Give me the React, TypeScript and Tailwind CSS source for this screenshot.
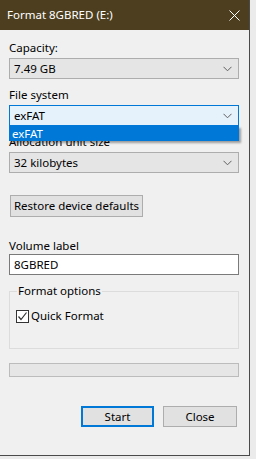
import React from "react";

const Chevron = () => (
  <svg width="9" height="6" viewBox="0 0 9 6" className="shrink-0">
    <path d="M0.5 0.8 L4.5 4.8 L8.5 0.8" fill="none" stroke="#606060" strokeWidth="1" />
  </svg>
);

function Combo({ value, active }: { value: string; active?: boolean }) {
  return (
    <div
      className={
        active
          ? "h-[21px] w-[230px] border border-[#0078d7] bg-[#e5f1fb] flex items-center justify-between pl-[4px] pr-[6px]"
          : "h-[21px] w-[230px] border border-[#adadad] bg-[#e5e5e5] flex items-center justify-between pl-[4px] pr-[6px]"
      }
    >
      <span className="text-black">{value}</span>
      <Chevron />
    </div>
  );
}

export default function App() {
  return (
    <div
      className="w-[256px] h-[459px] bg-[#ebebeb] overflow-hidden text-[11.5px] leading-[16px]"
      style={{ fontFamily: '"Noto Sans", "Liberation Sans", sans-serif' }}
    >
      <div className="w-[250px] h-[456px] bg-[#f0f0f0] border-r border-b border-[#4a4a4a] flex flex-col">
        <div className="h-[30px] shrink-0 bg-[#4d3e1f] flex items-center justify-between pl-[7px] pr-[9px]">
          <span className="text-white">Format 8GBRED (E:)</span>
          <svg width="11" height="11" viewBox="0 0 11 11">
            <path d="M0.5 0.5 L10.5 10.5 M10.5 0.5 L0.5 10.5" stroke="#ffffff" strokeWidth="1" />
          </svg>
        </div>
        <div className="flex flex-col pl-[9px] text-black">
          <div className="mt-[10px] h-[16px]">Capacity:</div>
          <div className="mt-[2px]">
            <Combo value="7.49 GB" />
          </div>
          <div className="mt-[8px] h-[16px]">File system</div>
          <div className="mt-[2px] relative">
            <Combo value="exFAT" active />
            <div className="absolute left-0 top-[21px] w-[230px] h-[15px] bg-[#0078d7] text-white pl-[3px] flex items-center shadow-[2px_2px_2px_rgba(0,0,0,0.35)] z-10">
              <span className="leading-[15px]">exFAT</span>
            </div>
          </div>
          <div className="mt-[8px] h-[16px]">Allocation unit size</div>
          <div className="mt-[2px]">
            <Combo value="32 kilobytes" />
          </div>
          <div className="mt-[22px] ml-[1px] w-[133px] h-[22px] border border-[#adadad] bg-[#e1e1e1] flex items-center justify-center">
            Restore device defaults
          </div>
          <div className="mt-[21px] h-[16px]">Volume label</div>
          <div className="w-[230px] h-[21px] border border-[#7a7a7a] bg-white flex items-center pl-[4px]">
            8GBRED
          </div>
          <div className="mt-[16px] w-[230px] h-[58px] border border-[#dcdcdc] relative">
            <span className="absolute left-[7px] top-[-9px] bg-[#f0f0f0] px-[1px]">Format options</span>
            <div className="mt-[16px] ml-[6px] flex items-center gap-[2px]">
              <div className="w-[13px] h-[13px] border border-[#333333] bg-white flex items-center justify-center">
                <svg width="11" height="11" viewBox="0 0 11 11">
                  <path d="M1.5 5.5 L4 8.5 L9.5 1.5" fill="none" stroke="#333333" strokeWidth="1.2" />
                </svg>
              </div>
              <span>Quick Format</span>
            </div>
          </div>
          <div className="mt-[14px] w-[230px] h-[14px] border border-[#bcbcbc] bg-[#e6e6e6]" />
          <div className="mt-[29px] w-[228px] flex justify-end gap-[9px]">
            <div className="w-[73px] h-[21px] border-2 border-[#0078d7] bg-[#e1e1e1] flex items-center justify-center">
              Start
            </div>
            <div className="w-[74px] h-[21px] border border-[#adadad] bg-[#e1e1e1] flex items-center justify-center">
              Close
            </div>
          </div>
        </div>
      </div>
    </div>
  );
}
